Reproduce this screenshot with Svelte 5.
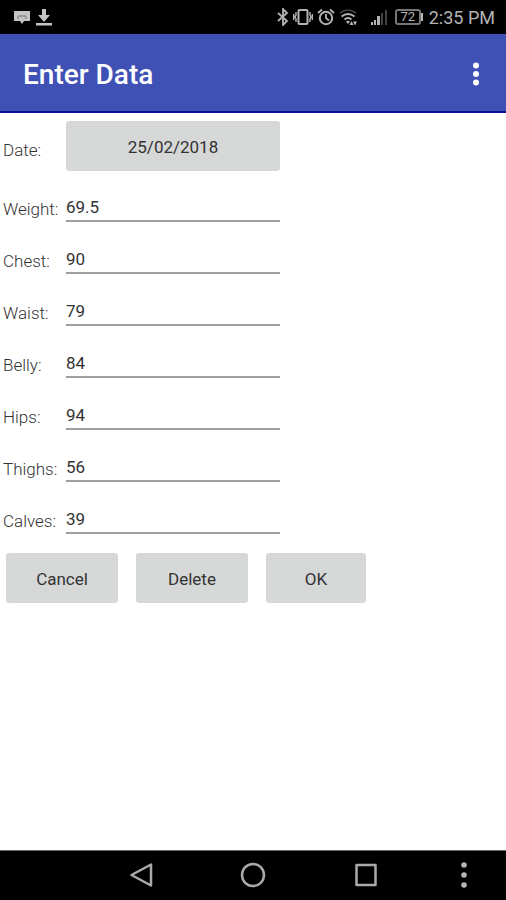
<script>
  let date = '25/02/2018';

  let fields = [
    { id: 'weight', label: 'Weight', value: '69.5' },
    { id: 'chest', label: 'Chest', value: '90' },
    { id: 'waist', label: 'Waist', value: '79' },
    { id: 'belly', label: 'Belly', value: '84' },
    { id: 'hips', label: 'Hips', value: '94' },
    { id: 'thighs', label: 'Thighs', value: '56' },
    { id: 'calves', label: 'Calves', value: '39' }
  ];
</script>

<div class="screen">
  <div class="status-bar">
    <div class="notifications">
      <svg width="16" height="14" viewBox="0 0 16 14">
        <path d="M0 1h16v10h-6l-2 3-2-3H0z" fill="#c4c4c4" />
        <path d="M4 9V7q0-1 1-1h6q1 0 1 1v2" fill="none" stroke="#8a8a8a" stroke-width="1.5" />
      </svg>
      <svg width="16" height="18" viewBox="0 0 16 18">
        <path d="M6 1h4v6h4l-6 7-6-7h4zM0 15h16v2.500H0z" fill="#c4c4c4" />
      </svg>
    </div>

    <div class="system">
      <!-- bluetooth -->
      <svg width="12" height="18" viewBox="0 0 12 18">
        <path d="M1 5l9 8-4 4V1l4 4-9 8" fill="none" stroke="#b4b4b4" stroke-width="1.8" />
      </svg>
      <!-- vibrate -->
      <svg width="20" height="18" viewBox="0 0 20 18">
        <rect x="5.5" y="2" width="9" height="14" rx="1" fill="none" stroke="#b4b4b4" stroke-width="2" />
        <path d="M3 4v3l-1 2 1 2v3M17 4v3l1 2-1 2v3M.7 6v6M19.3 6v6" fill="none" stroke="#b4b4b4" stroke-width="1.4" />
      </svg>
      <!-- alarm -->
      <svg width="18" height="18" viewBox="0 0 18 18">
        <circle cx="9" cy="10" r="6.2" fill="none" stroke="#b4b4b4" stroke-width="2" />
        <path d="M1 5l4-3.5M17 5l-4-3.5M9 6v4l3 2.5" fill="none" stroke="#b4b4b4" stroke-width="1.8" />
      </svg>
      <!-- wifi -->
      <svg width="19" height="18" viewBox="0 0 19 18">
        <path d="M1 5q8-6 16 0" fill="none" stroke="#444" stroke-width="1.6" />
        <path d="M2.500 8.5q6.500-5 13 0M5.5 11.5q3.5-3 7 0" fill="none" stroke="#b4b4b4" stroke-width="2" />
        <path d="M7 13.5q2-1.5 4 0l-2 2.5z" fill="#b4b4b4" />
        <path d="M12.500 13l2 4h-4zM16 17.500l-2-4h4z" fill="#b4b4b4" />
      </svg>
      <!-- signal -->
      <svg class="signal" width="17" height="18" viewBox="0 0 17 18">
        <path d="M1 14h2v3H1zM4 12h2v5H4zM7 8h3v9H7z" fill="#b4b4b4" />
        <path d="M11 5h2v12h-2zM15 2h2v15h-2z" fill="#444" />
      </svg>
      <span class="battery">72</span>
      <span class="clock">2:35 PM</span>
    </div>
  </div>

  <header>
    <h1>Enter Data</h1>
    <button class="overflow" aria-label="More options">
      <svg width="8" height="24" viewBox="0 0 8 24">
        <circle cx="4" cy="3.5" r="3" />
        <circle cx="4" cy="12" r="3" />
        <circle cx="4" cy="20.5" r="3" />
      </svg>
    </button>
  </header>

  <form on:submit|preventDefault>
    <div class="row date-row">
      <label for="date">Date:</label>
      <button type="button" id="date" class="btn">{date}</button>
    </div>
    {#each fields as field}
      <div class="row">
        <label for={field.id}>{field.label}:</label>
        <input id={field.id} type="text" inputmode="decimal" bind:value={field.value} />
      </div>
    {/each}
    <div class="actions">
      <button type="button" class="btn">Cancel</button>
      <button type="button" class="btn">Delete</button>
      <button type="submit" class="btn ok">OK</button>
    </div>
  </form>

  <nav>
    <button aria-label="Back">
      <svg width="24" height="26" viewBox="0 0 24 26">
        <path d="M22 2.5v21L2.500 13z" />
      </svg>
    </button>
    <button aria-label="Home">
      <svg width="26" height="26" viewBox="0 0 26 26">
        <circle cx="13" cy="13" r="11" />
      </svg>
    </button>
    <button aria-label="Recent apps">
      <svg width="24" height="26" viewBox="0 0 24 26">
        <rect x="2.5" y="3" width="19" height="20" />
      </svg>
    </button>
    <button class="dots" aria-label="Menu">
      <svg width="8" height="28" viewBox="0 0 8 28">
        <circle cx="4" cy="4" r="2.8" />
        <circle cx="4" cy="14" r="2.8" />
        <circle cx="4" cy="24" r="2.8" />
      </svg>
    </button>
  </nav>
</div>

<style>
  :global(body) {
    margin: 0;
    background: #fff;
  }
  .screen {
    display: flex;
    flex-direction: column;
    min-height: 100vh;
    font-family: Roboto, 'Noto Sans', sans-serif;
    font-size: 17px;
    color: #333;
  }
  svg {
    display: block;
  }
  button {
    margin: 0;
    padding: 0;
    border: none;
    background: none;
    font: inherit;
    color: inherit;
    cursor: pointer;
  }

  .status-bar {
    display: flex;
    justify-content: space-between;
    align-items: center;
    box-sizing: border-box;
    height: 34px;
    padding: 0 11px 0 14px;
    background: #000;
    color: #b4b4b4;
  }
  .notifications,
  .system {
    display: flex;
    align-items: center;
  }
  .notifications {
    gap: 6px;
  }
  .system {
    gap: 4px;
  }
  .signal {
    margin: 0 4px 0 8px;
  }
  .battery {
    position: relative;
    box-sizing: border-box;
    width: 26px;
    height: 16px;
    margin-right: 4px;
    border: 2px solid #777;
    border-radius: 3px;
    font-size: 13px;
    line-height: 12px;
    text-align: center;
  }
  .battery::after {
    content: '';
    position: absolute;
    top: 2px;
    right: -4px;
    width: 2px;
    height: 8px;
    background: #b4b4b4;
  }
  .clock {
    padding-top: 2px;
    font-size: 18px;
    line-height: 32px;
  }

  header {
    display: flex;
    justify-content: space-between;
    align-items: center;
    box-sizing: border-box;
    height: 79px;
    padding: 2px 20px 0 23px;
    border-bottom: 2px solid #0a0f96;
    background: #3f51b5;
  }
  h1 {
    margin: 0;
    padding-top: 2px;
    font-size: 28px;
    font-weight: 500;
    line-height: 32px;
    color: #fff;
  }
  .overflow {
    padding: 0 6px;
    fill: #fff;
  }

  form {
    flex: 1;
    padding-top: 4px;
  }
  .row {
    display: grid;
    grid-template-columns: 63px minmax(0, 214px);
    align-items: center;
    height: 52px;
    padding-left: 3px;
  }
  label {
    font-weight: 300;
  }
  .date-row {
    height: 66px;
  }
  .btn {
    height: 50px;
    padding-top: 2px;
    border-radius: 3px;
    background: #d6d7d7;
    color: #333;
  }
  .date-row .btn {
    margin-bottom: 8px;
  }
  input {
    box-sizing: border-box;
    width: 100%;
    height: 28px;
    margin: 0 0 2px;
    padding: 0;
    border: none;
    border-bottom: 2px solid #a0a0a0;
    border-radius: 0;
    background: none;
    font: inherit;
    color: #333;
    outline: none;
  }
  .actions {
    display: flex;
    gap: 18px;
    padding: 6px;
  }
  .actions .btn {
    width: 112px;
  }
  .actions .ok {
    width: 100px;
  }

  nav {
    display: grid;
    grid-template-columns: 1fr 1fr 1fr 84px;
    box-sizing: border-box;
    height: 50px;
    padding: 0 0 2px 85px;
    border-top: 1px solid #666;
    background: #000;
  }
  nav button {
    display: flex;
    justify-content: center;
    align-items: center;
    fill: none;
    stroke: #aaa;
    stroke-width: 2.5;
    stroke-linejoin: round;
  }
  nav .dots {
    fill: #b4b4b4;
    stroke: none;
  }
</style>
